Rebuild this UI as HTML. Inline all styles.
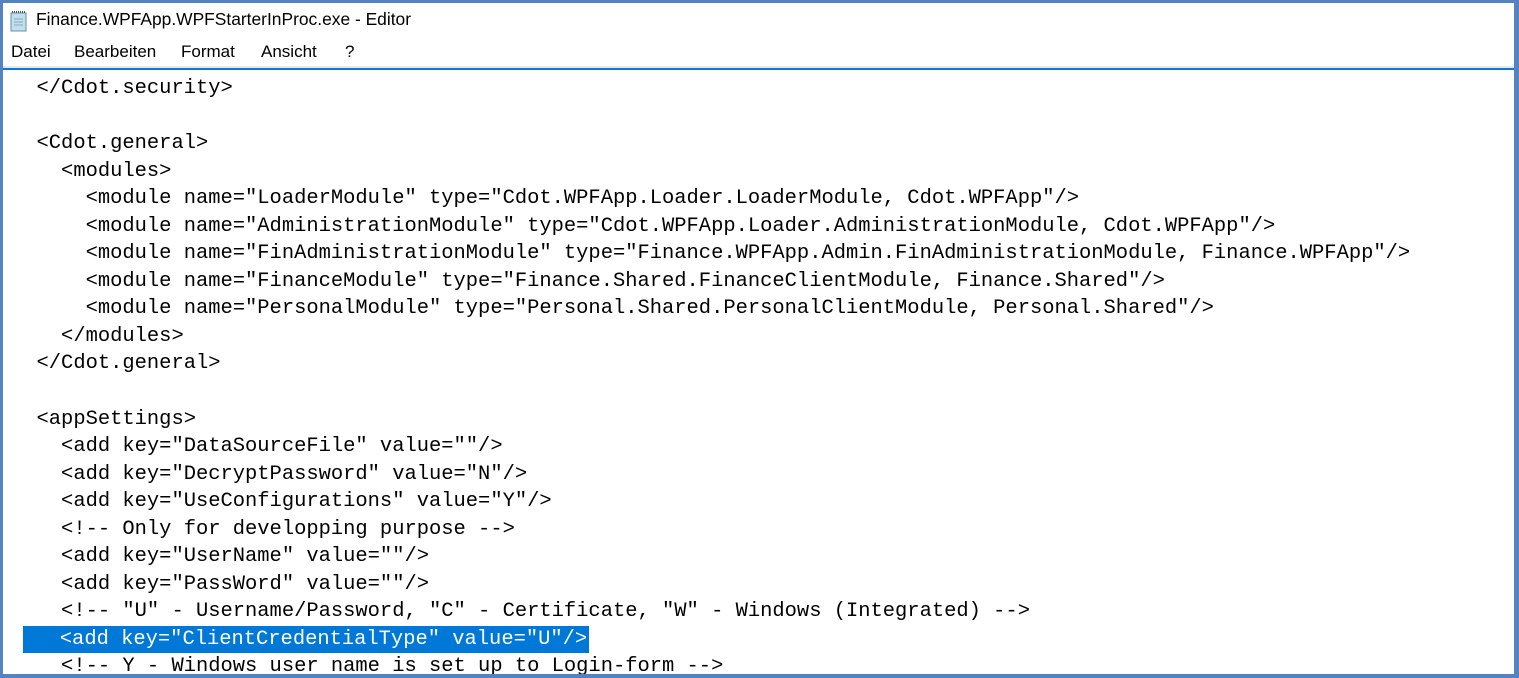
<!DOCTYPE html>
<html><head><meta charset="utf-8"><style>
html,body{margin:0;padding:0;}
body{width:1519px;height:678px;position:relative;overflow:hidden;background:#5583bf;}
.win{position:absolute;left:3px;top:3px;width:1511px;height:671px;background:#fff;overflow:hidden;}
.title{position:absolute;left:33px;top:6px;font:17.4px "Liberation Sans",sans-serif;color:#000;}
.menu span{position:absolute;top:39px;font:17px "Liberation Sans",sans-serif;color:#000;}
.sep{position:absolute;left:0;right:0;top:63px;height:2px;background:#e8e8e8;}
.sep2{position:absolute;left:0;right:0;top:65px;height:2px;background:#0a78d7;}
.code{position:absolute;left:9px;top:72px;font:20.45px "Liberation Mono",monospace;line-height:27.55px;color:#000;white-space:pre;}
.sel{background:#0078d7;color:#fff;display:inline-block;width:566px;margin-left:11px;}
</style></head><body>
<div class="win">
<svg style="position:absolute;left:6px;top:7px" width="20" height="22" viewBox="0 0 20 22">
<rect x="2" y="3" width="15" height="18" fill="#bfe0ee" stroke="#6b8fa3"/>
<line x1="5" y1="9" x2="14" y2="9" stroke="#8ab"/><line x1="5" y1="12" x2="14" y2="12" stroke="#8ab"/><line x1="5" y1="15" x2="14" y2="15" stroke="#8ab"/>
<path d="M3 2h13" stroke="#555" stroke-dasharray="1 1" stroke-width="2"/>
</svg>
<div class="title">Finance.WPFApp.WPFStarterInProc.exe - Editor</div>
<div class="menu"><span style="left:8px">Datei</span><span style="left:71px">Bearbeiten</span><span style="left:178px">Format</span><span style="left:258px">Ansicht</span><span style="left:342px">?</span></div>
<div class="sep"></div><div class="sep2"></div>
<div class="code">  &lt;/Cdot.security&gt;

  &lt;Cdot.general&gt;
    &lt;modules&gt;
      &lt;module name="LoaderModule" type="Cdot.WPFApp.Loader.LoaderModule, Cdot.WPFApp"/&gt;
      &lt;module name="AdministrationModule" type="Cdot.WPFApp.Loader.AdministrationModule, Cdot.WPFApp"/&gt;
      &lt;module name="FinAdministrationModule" type="Finance.WPFApp.Admin.FinAdministrationModule, Finance.WPFApp"/&gt;
      &lt;module name="FinanceModule" type="Finance.Shared.FinanceClientModule, Finance.Shared"/&gt;
      &lt;module name="PersonalModule" type="Personal.Shared.PersonalClientModule, Personal.Shared"/&gt;
    &lt;/modules&gt;
  &lt;/Cdot.general&gt;

  &lt;appSettings&gt;
    &lt;add key="DataSourceFile" value=""/&gt;
    &lt;add key="DecryptPassword" value="N"/&gt;
    &lt;add key="UseConfigurations" value="Y"/&gt;
    &lt;!-- Only for developping purpose --&gt;
    &lt;add key="UserName" value=""/&gt;
    &lt;add key="PassWord" value=""/&gt;
    &lt;!-- "U" - Username/Password, "C" - Certificate, "W" - Windows (Integrated) --&gt;
<span class="sel">   &lt;add key="ClientCredentialType" value="U"/&gt;</span>
    &lt;!-- Y - Windows user name is set up to Login-form --&gt;</div>
</div>
</body></html>
